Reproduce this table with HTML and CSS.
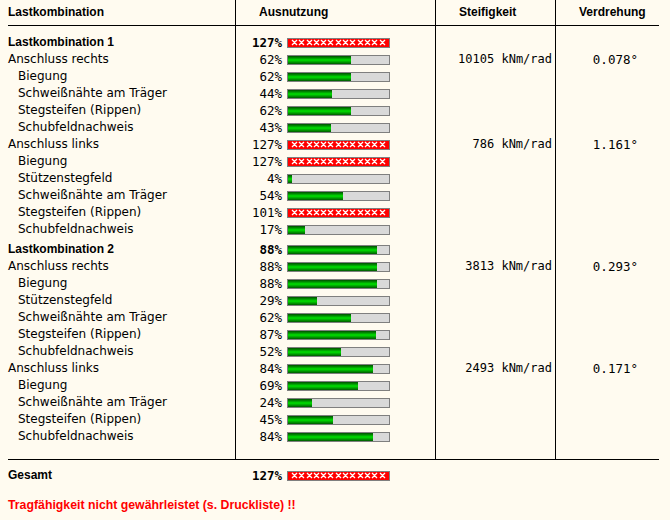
FILE: index.html
```html
<!DOCTYPE html>
<html lang="de">
<head>
<meta charset="utf-8">
<title>Ausnutzung</title>
<link rel="stylesheet" href="styles.css">
</head>
<body>
<div class="sheet">
  <div class="row head">
    <div class="cell name">Lastkombination</div>
    <div class="cell util">Ausnutzung</div>
    <div class="cell stiff">Steifigkeit</div>
    <div class="cell rot">Verdrehung</div>
  </div>
  <div class="body">
    <div class="row lk first">
      <div class="cell name">Lastkombination 1</div>
      <div class="cell util"><span class="pct">127%</span><span class="bar over"></span></div>
      <div class="cell stiff"></div><div class="cell rot"></div>
    </div>
    <div class="row">
      <div class="cell name">Anschluss rechts</div>
      <div class="cell util"><span class="pct">62%</span><span class="bar"><span class="fill" style="width:62%"></span></span></div>
      <div class="cell stiff">10105 kNm/rad</div><div class="cell rot">0.078°</div>
    </div>
    <div class="row sub">
      <div class="cell name">Biegung</div>
      <div class="cell util"><span class="pct">62%</span><span class="bar"><span class="fill" style="width:62%"></span></span></div>
      <div class="cell stiff"></div><div class="cell rot"></div>
    </div>
    <div class="row sub">
      <div class="cell name">Schweißnähte am Träger</div>
      <div class="cell util"><span class="pct">44%</span><span class="bar"><span class="fill" style="width:44%"></span></span></div>
      <div class="cell stiff"></div><div class="cell rot"></div>
    </div>
    <div class="row sub">
      <div class="cell name">Stegsteifen (Rippen)</div>
      <div class="cell util"><span class="pct">62%</span><span class="bar"><span class="fill" style="width:62%"></span></span></div>
      <div class="cell stiff"></div><div class="cell rot"></div>
    </div>
    <div class="row sub">
      <div class="cell name">Schubfeldnachweis</div>
      <div class="cell util"><span class="pct">43%</span><span class="bar"><span class="fill" style="width:43%"></span></span></div>
      <div class="cell stiff"></div><div class="cell rot"></div>
    </div>
    <div class="row">
      <div class="cell name">Anschluss links</div>
      <div class="cell util"><span class="pct">127%</span><span class="bar over"></span></div>
      <div class="cell stiff">786 kNm/rad</div><div class="cell rot">1.161°</div>
    </div>
    <div class="row sub">
      <div class="cell name">Biegung</div>
      <div class="cell util"><span class="pct">127%</span><span class="bar over"></span></div>
      <div class="cell stiff"></div><div class="cell rot"></div>
    </div>
    <div class="row sub">
      <div class="cell name">Stützenstegfeld</div>
      <div class="cell util"><span class="pct">4%</span><span class="bar"><span class="fill" style="width:4%"></span></span></div>
      <div class="cell stiff"></div><div class="cell rot"></div>
    </div>
    <div class="row sub">
      <div class="cell name">Schweißnähte am Träger</div>
      <div class="cell util"><span class="pct">54%</span><span class="bar"><span class="fill" style="width:54%"></span></span></div>
      <div class="cell stiff"></div><div class="cell rot"></div>
    </div>
    <div class="row sub">
      <div class="cell name">Stegsteifen (Rippen)</div>
      <div class="cell util"><span class="pct">101%</span><span class="bar over"></span></div>
      <div class="cell stiff"></div><div class="cell rot"></div>
    </div>
    <div class="row sub">
      <div class="cell name">Schubfeldnachweis</div>
      <div class="cell util"><span class="pct">17%</span><span class="bar"><span class="fill" style="width:17%"></span></span></div>
      <div class="cell stiff"></div><div class="cell rot"></div>
    </div>

    <div class="row lk gap">
      <div class="cell name">Lastkombination 2</div>
      <div class="cell util"><span class="pct">88%</span><span class="bar"><span class="fill" style="width:88%"></span></span></div>
      <div class="cell stiff"></div><div class="cell rot"></div>
    </div>
    <div class="row">
      <div class="cell name">Anschluss rechts</div>
      <div class="cell util"><span class="pct">88%</span><span class="bar"><span class="fill" style="width:88%"></span></span></div>
      <div class="cell stiff">3813 kNm/rad</div><div class="cell rot">0.293°</div>
    </div>
    <div class="row sub">
      <div class="cell name">Biegung</div>
      <div class="cell util"><span class="pct">88%</span><span class="bar"><span class="fill" style="width:88%"></span></span></div>
      <div class="cell stiff"></div><div class="cell rot"></div>
    </div>
    <div class="row sub">
      <div class="cell name">Stützenstegfeld</div>
      <div class="cell util"><span class="pct">29%</span><span class="bar"><span class="fill" style="width:29%"></span></span></div>
      <div class="cell stiff"></div><div class="cell rot"></div>
    </div>
    <div class="row sub">
      <div class="cell name">Schweißnähte am Träger</div>
      <div class="cell util"><span class="pct">62%</span><span class="bar"><span class="fill" style="width:62%"></span></span></div>
      <div class="cell stiff"></div><div class="cell rot"></div>
    </div>
    <div class="row sub">
      <div class="cell name">Stegsteifen (Rippen)</div>
      <div class="cell util"><span class="pct">87%</span><span class="bar"><span class="fill" style="width:87%"></span></span></div>
      <div class="cell stiff"></div><div class="cell rot"></div>
    </div>
    <div class="row sub">
      <div class="cell name">Schubfeldnachweis</div>
      <div class="cell util"><span class="pct">52%</span><span class="bar"><span class="fill" style="width:52%"></span></span></div>
      <div class="cell stiff"></div><div class="cell rot"></div>
    </div>
    <div class="row">
      <div class="cell name">Anschluss links</div>
      <div class="cell util"><span class="pct">84%</span><span class="bar"><span class="fill" style="width:84%"></span></span></div>
      <div class="cell stiff">2493 kNm/rad</div><div class="cell rot">0.171°</div>
    </div>
    <div class="row sub">
      <div class="cell name">Biegung</div>
      <div class="cell util"><span class="pct">69%</span><span class="bar"><span class="fill" style="width:69%"></span></span></div>
      <div class="cell stiff"></div><div class="cell rot"></div>
    </div>
    <div class="row sub">
      <div class="cell name">Schweißnähte am Träger</div>
      <div class="cell util"><span class="pct">24%</span><span class="bar"><span class="fill" style="width:24%"></span></span></div>
      <div class="cell stiff"></div><div class="cell rot"></div>
    </div>
    <div class="row sub">
      <div class="cell name">Stegsteifen (Rippen)</div>
      <div class="cell util"><span class="pct">45%</span><span class="bar"><span class="fill" style="width:45%"></span></span></div>
      <div class="cell stiff"></div><div class="cell rot"></div>
    </div>
    <div class="row sub last">
      <div class="cell name">Schubfeldnachweis</div>
      <div class="cell util"><span class="pct">84%</span><span class="bar"><span class="fill" style="width:84%"></span></span></div>
      <div class="cell stiff"></div><div class="cell rot"></div>
    </div>
  </div>
  <div class="row total">
    <div class="cell name">Gesamt</div>
    <div class="cell util"><span class="pct">127%</span><span class="bar over"></span></div>
    <div class="cell stiff"></div><div class="cell rot"></div>
  </div>
  <p class="alert">Tragfähigkeit nicht gewährleistet (s. Druckliste) !!</p>
</div>
</body>
</html>
```

FILE: styles.css
```css
html, body {
  margin: 0;
  background: #fffbf0;
}

body {
  font-family: "DejaVu Sans", sans-serif;
  font-size: 12px;
  color: #000;
}

.sheet {
  width: 651px;
  padding-left: 8px;
}

.row {
  display: grid;
  grid-template-columns: 227px 200px 120px 104px;
  line-height: 17px;
}

.cell {
  white-space: nowrap;
  min-width: 0;
}

.cell + .cell {
  border-left: 1px solid #000;
}

/* header */
.head {
  border-bottom: 1px solid #000;
}

.head .cell {
  line-height: 25px;
  text-align: left;
  font-family: "Liberation Sans", sans-serif;
  font-weight: bold;
  font-size: 12px;
}

.head .cell + .cell {
  padding-left: 23px;
  padding-right: 0;
}

/* body */
.body {
  border-bottom: 1px solid #000;
}

.row.first > .cell {
  padding-top: 8px;
}

.row.gap > .cell {
  padding-top: 3px;
}

.row.last > .cell {
  padding-bottom: 14px;
}

.sub .name {
  padding-left: 10px;
}

.lk .name,
.total .name {
  font-family: "Liberation Sans", sans-serif;
  font-weight: bold;
}

.util {
  display: flex;
  align-items: center;
}

.pct {
  width: 46px;
  text-align: right;
  font-family: "DejaVu Sans Mono", monospace;
  font-size: 12.5px;
}

.lk .pct,
.total .pct {
  font-weight: bold;
}

.bar {
  display: flex;
  box-sizing: border-box;
  width: 103px;
  height: 10px;
  margin-left: 5px;
  border: 1px solid #7f7f7f;
  background: #d9d9d9;
}

.fill {
  height: 100%;
  background: linear-gradient(to bottom, #005000 0%, #008a00 22%, #00e000 50%, #00a800 72%, #005800 100%);
}

.bar.over {
  background:
    url("data:image/svg+xml,%3Csvg xmlns='http://www.w3.org/2000/svg' width='101' height='8'%3E%3Cpath d='M4 1l5 5M9 1l-5 5M11 1l5 5M16 1l-5 5M19 1l5 5M24 1l-5 5M26 1l5 5M31 1l-5 5M33 1l5 5M38 1l-5 5M40 1l5 5M45 1l-5 5M48 1l5 5M53 1l-5 5M55 1l5 5M60 1l-5 5M62 1l5 5M67 1l-5 5M70 1l5 5M75 1l-5 5M77 1l5 5M82 1l-5 5M84 1l5 5M89 1l-5 5M92 1l5 5M97 1l-5 5' stroke='%23fff' stroke-width='1.3' fill='none'/%3E%3C/svg%3E") 0 0 / 101px 8px no-repeat,
    #ff0000;
}

.stiff {
  text-align: right;
  padding-right: 3px;
  font-family: "DejaVu Sans Mono", monospace;
  font-size: 12px;
}

.rot {
  text-align: right;
  padding-right: 21px;
  font-family: "DejaVu Sans Mono", monospace;
  font-size: 12.5px;
}

/* total */
.total {
  margin-top: 7px;
}

.total .cell + .cell {
  border-left-color: transparent;
}

.alert {
  margin: 13px 0 0;
  line-height: 17px;
  color: #ff0000;
  font-family: "Liberation Sans", sans-serif;
  font-weight: bold;
  font-size: 12.3px;
}
```
